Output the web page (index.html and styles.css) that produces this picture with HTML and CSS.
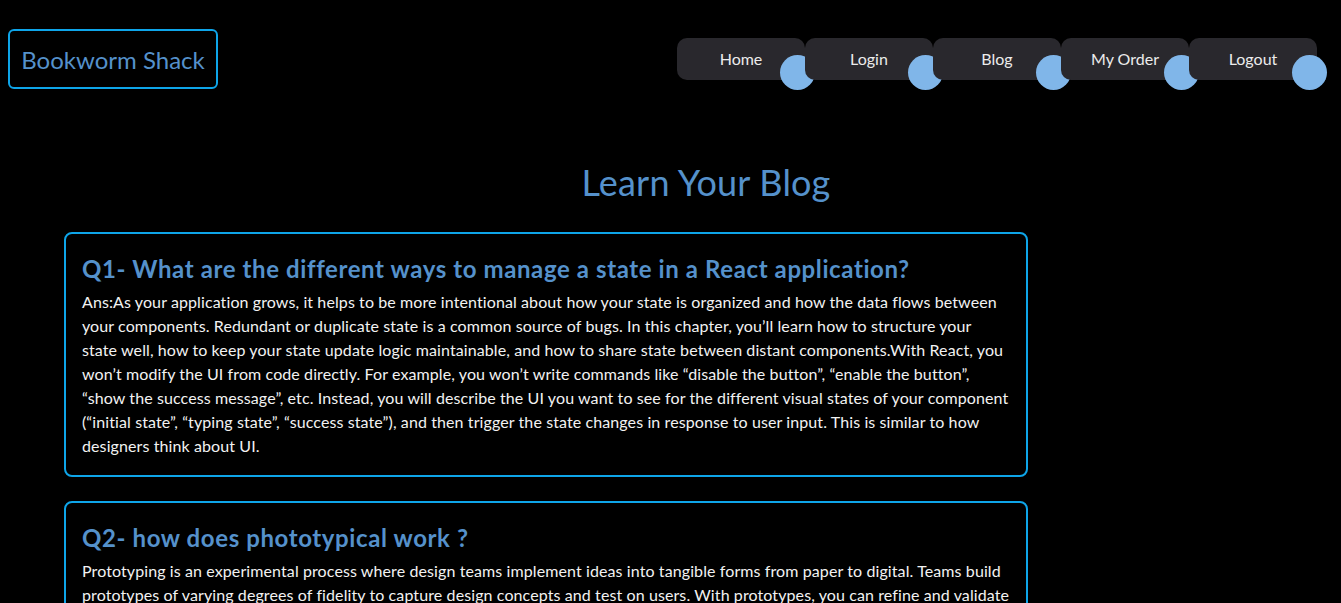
FILE: index.html
```html
<!DOCTYPE html>
<html lang="en">
<head>
<meta charset="utf-8">
<title>Bookworm Shack - Blog</title>
<link rel="stylesheet" href="styles.css">
</head>
<body>
<header class="header">
  <a class="logo" href="#">Bookworm Shack</a>
  <nav class="nav">
    <a class="nav-btn" href="#">Home</a>
    <a class="nav-btn" href="#">Login</a>
    <a class="nav-btn" href="#">Blog</a>
    <a class="nav-btn" href="#">My Order</a>
    <a class="nav-btn" href="#">Logout</a>
  </nav>
</header>
<main class="main">
  <h1 class="title">Learn Your Blog</h1>
  <section class="cards">
    <article class="card">
      <h2 class="q">Q1- What are the different ways to manage a state in a React application?</h2>
      <p class="a">Ans:As your application grows, it helps to be more intentional about how your state is organized and how the data flows between your components. Redundant or duplicate state is a common source of bugs. In this chapter, you’ll learn how to structure your state well, how to keep your state update logic maintainable, and how to share state between distant components.With React, you won’t modify the UI from code directly. For example, you won’t write commands like “disable the button”, “enable the button”, “show the success message”, etc. Instead, you will describe the UI you want to see for the different visual states of your component (“initial state”, “typing state”, “success state”), and then trigger the state changes in response to user input. This is similar to how designers think about UI.</p>
    </article>
    <article class="card">
      <h2 class="q">Q2- how does phototypical work ?</h2>
      <p class="a">Prototyping is an experimental process where design teams implement ideas into tangible forms from paper to digital. Teams build prototypes of varying degrees of fidelity to capture design concepts and test on users. With prototypes, you can refine and validate designs so your brand can release the right products.</p>
    </article>
  </section>
</main>
</body>
</html>
```
FILE: styles.css
```css
* { box-sizing: border-box; }
html, body { background: #000; }
body {
  margin: 0;
  font-family: Lato, "Open Sans", sans-serif;
  color: #f2f2f2;
}
.header {
  display: flex;
  align-items: center;
  justify-content: space-between;
  padding: 29px 24px 0 8px;
}
.logo {
  display: flex;
  align-items: center;
  justify-content: center;
  width: 210px;
  height: 60px;
  border: 2px solid #0ea5e9;
  border-radius: 6px;
  color: #5591cb;
  font-size: 24px;
  text-decoration: none;
}
.nav {
  display: flex;
}
.nav-btn {
  position: relative;
  display: flex;
  align-items: center;
  justify-content: center;
  width: 128px;
  height: 42px;
  padding-bottom: 2px;
  background: #29282d;
  border-radius: 10px;
  color: #ececec;
  font-size: 16px;
  text-decoration: none;
}
.nav-btn::after {
  content: "";
  position: absolute;
  left: 103px;
  top: 17px;
  width: 35px;
  height: 35px;
  border-radius: 50%;
  background: #80b6e9;
}
.main {
  padding: 0 64px;
}
.title {
  margin: 70px 0 26px;
  padding-left: 71px;
  text-align: center;
  font-size: 36px;
  font-weight: 400;
  letter-spacing: 0.2px;
  color: #5591cb;
  line-height: 1.3;
}
.cards {
  display: flex;
  flex-direction: column;
  gap: 24px;
  width: 964px;
}
.card {
  border: 2px solid #0ea5e9;
  border-radius: 8px;
  padding: 19px 16px 17px;
}
.q {
  margin: 0 0 5px;
  font-size: 24px;
  font-weight: 700;
  letter-spacing: 0.6px;
  color: #5591cb;
  line-height: 32px;
}
.a {
  margin: 0;
  font-size: 16px;
  line-height: 24px;
  letter-spacing: 0.1px;
}
```
